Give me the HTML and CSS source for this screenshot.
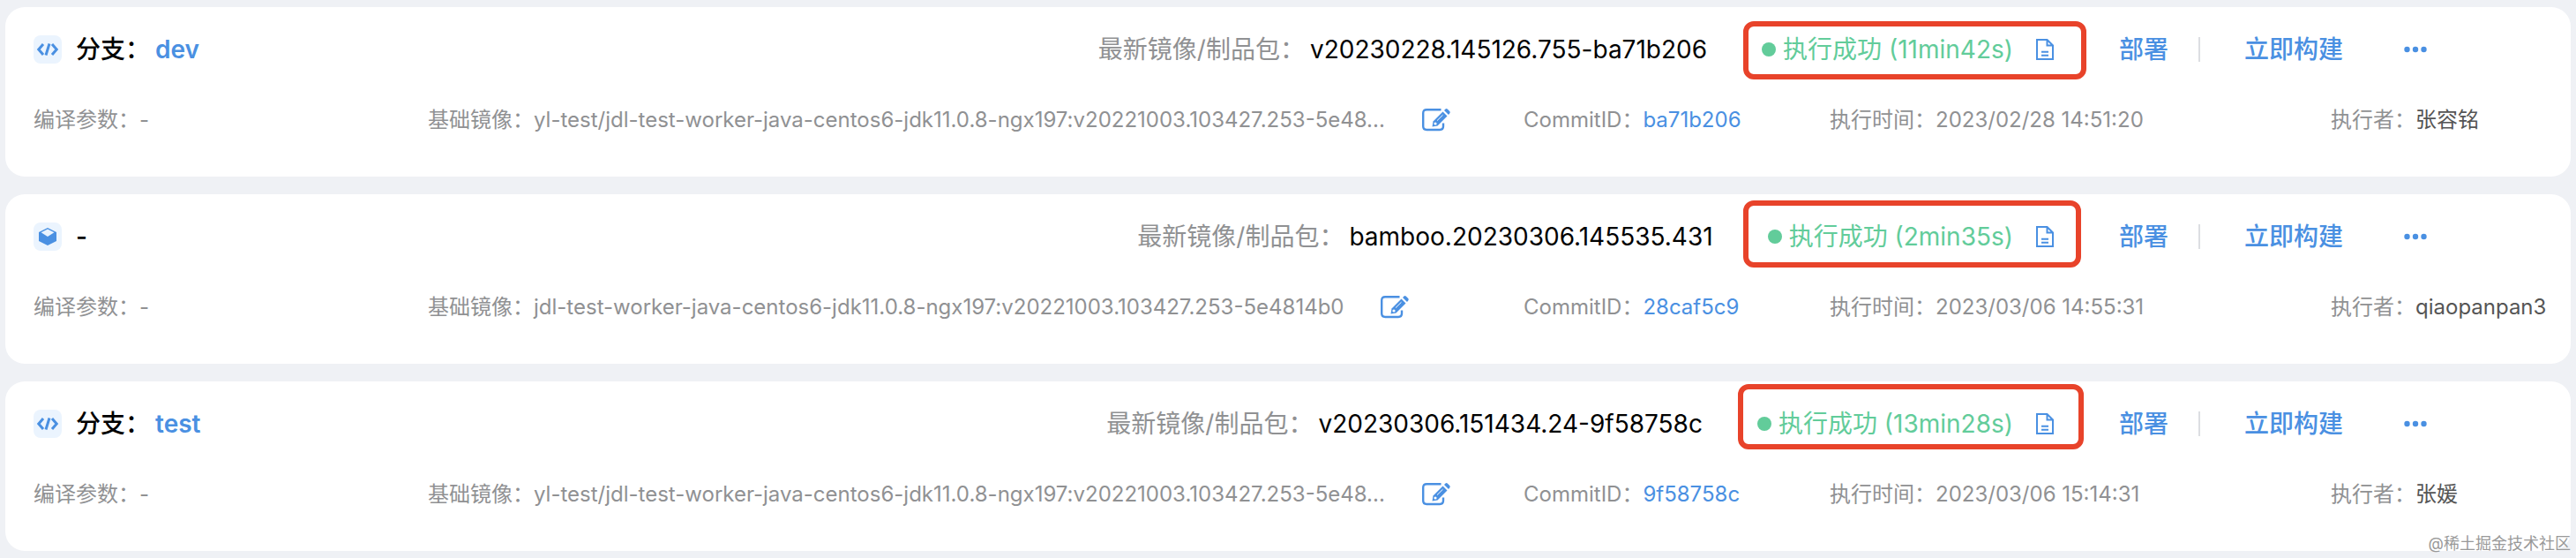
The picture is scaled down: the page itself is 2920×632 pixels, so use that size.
FILE: index.html
```html
<!DOCTYPE html>
<html lang="zh-CN">
<head>
    <meta charset="UTF-8">
    <meta name="viewport" content="width=device-width, initial-scale=1.0">
    <title>构建列表</title>
    <link rel="stylesheet" href="styles.css">
</head>
<body>
    <svg class="sprite" aria-hidden="true">
        <symbol id="icon-code" viewBox="0 0 32 32">
            <path d="M11 10 L5.8 16 L11 22 M21 10 L26.2 16 L21 22 M18 9.5 L14 22.5" fill="none" stroke="#4a90e2" stroke-width="3"/>
        </symbol>
        <symbol id="icon-box" viewBox="0 0 32 32">
            <path d="M16 6 L26 11 V21 L16 26 L6 21 V11 Z" fill="#4a90e2"/>
            <path d="M16 7.6 L23.4 11.3 L16 16 L8.6 11.3 Z" fill="#ebf4fe"/>
        </symbol>
        <symbol id="icon-edit" viewBox="0 0 32 28">
            <path d="M21.5 2.2 H5.2 Q1.2 2.2 1.2 6.2 V21 Q1.2 25 5.2 25 H20 Q24 25 24 21 V17.5" fill="none" stroke="#4a90e2" stroke-width="2.4"/>
            <path d="M11.5 21.5 L12.5 15.5 L23.5 4.5 L28.5 9.5 L17.5 20.5 Z" fill="#4a90e2"/>
            <path d="M25 3 L26.5 1.5 Q27.5 .5 28.7 1.5 L31.2 4 Q32.2 5.2 31.2 6.4 L30 8 Z" fill="#4a90e2"/>
            <path d="M17 14.6 L23.5 8.2" stroke="#fff" stroke-width="1"/>
            <circle cx="15" cy="18" r="1.6" fill="#fff"/>
        </symbol>
        <symbol id="icon-log" viewBox="0 0 20 24">
            <path d="M1 1 H12.5 L19 7.5 V23 H1 Z M12.5 1 V7.5 H19 M6 14.8 H14 M6 18.8 H14" fill="none" stroke="#4a90e2" stroke-width="2"/>
        </symbol>
        <symbol id="icon-more" viewBox="0 0 26 8">
            <circle cx="3.5" cy="4" r="3.2" fill="#4a90e2"/>
            <circle cx="13" cy="4" r="3.2" fill="#4a90e2"/>
            <circle cx="22.5" cy="4" r="3.2" fill="#4a90e2"/>
        </symbol>
    </svg>

    <main class="list">
        <section class="card">
            <div class="card-head">
                <svg class="type-icon"><use href="#icon-code"/></svg>
                <h2 class="branch">分支：<a href="#dev">dev</a></h2>
                <p class="version"><span>最新镜像/制品包：</span>v20230228.145126.755-ba71b206</p>
                <div class="status">
                    <i class="dot"></i>
                    <span>执行成功 (11min42s)</span>
                    <button type="button" aria-label="日志"><svg class="log-icon"><use href="#icon-log"/></svg></button>
                    <span class="mark mark-first"></span>
                </div>
                <div class="actions">
                    <button type="button">部署</button>
                    <i class="divider"></i>
                    <button type="button">立即构建</button>
                    <button type="button" class="more" aria-label="更多"><svg class="more-icon"><use href="#icon-more"/></svg></button>
                </div>
            </div>
            <div class="card-info">
                <p>编译参数：-</p>
                <p class="image">基础镜像：yl-test/jdl-test-worker-java-centos6-jdk11.0.8-ngx197:v20221003.103427.253-5e48...
                    <button type="button" aria-label="编辑"><svg class="edit-icon"><use href="#icon-edit"/></svg></button></p>
                <p>CommitID：<a href="#ba71b206">ba71b206</a></p>
                <p>执行时间：2023/02/28 14:51:20</p>
                <p>执行者：<span class="user">张容铭</span></p>
            </div>
        </section>

        <section class="card">
            <div class="card-head">
                <svg class="type-icon"><use href="#icon-box"/></svg>
                <h2 class="branch">-</h2>
                <p class="version"><span>最新镜像/制品包：</span>bamboo.20230306.145535.431</p>
                <div class="status">
                    <i class="dot"></i>
                    <span>执行成功 (2min35s)</span>
                    <button type="button" aria-label="日志"><svg class="log-icon"><use href="#icon-log"/></svg></button>
                    <span class="mark mark-second"></span>
                </div>
                <div class="actions">
                    <button type="button">部署</button>
                    <i class="divider"></i>
                    <button type="button">立即构建</button>
                    <button type="button" class="more" aria-label="更多"><svg class="more-icon"><use href="#icon-more"/></svg></button>
                </div>
            </div>
            <div class="card-info">
                <p>编译参数：-</p>
                <p class="image">基础镜像：jdl-test-worker-java-centos6-jdk11.0.8-ngx197:v20221003.103427.253-5e4814b0
                    <button type="button" aria-label="编辑"><svg class="edit-icon"><use href="#icon-edit"/></svg></button></p>
                <p>CommitID：<a href="#28caf5c9">28caf5c9</a></p>
                <p>执行时间：2023/03/06 14:55:31</p>
                <p>执行者：<span class="user">qiaopanpan3</span></p>
            </div>
        </section>

        <section class="card">
            <div class="card-head">
                <svg class="type-icon"><use href="#icon-code"/></svg>
                <h2 class="branch">分支：<a href="#test">test</a></h2>
                <p class="version"><span>最新镜像/制品包：</span>v20230306.151434.24-9f58758c</p>
                <div class="status">
                    <i class="dot"></i>
                    <span>执行成功 (13min28s)</span>
                    <button type="button" aria-label="日志"><svg class="log-icon"><use href="#icon-log"/></svg></button>
                    <span class="mark mark-third"></span>
                </div>
                <div class="actions">
                    <button type="button">部署</button>
                    <i class="divider"></i>
                    <button type="button">立即构建</button>
                    <button type="button" class="more" aria-label="更多"><svg class="more-icon"><use href="#icon-more"/></svg></button>
                </div>
            </div>
            <div class="card-info">
                <p>编译参数：-</p>
                <p class="image">基础镜像：yl-test/jdl-test-worker-java-centos6-jdk11.0.8-ngx197:v20221003.103427.253-5e48...
                    <button type="button" aria-label="编辑"><svg class="edit-icon"><use href="#icon-edit"/></svg></button></p>
                <p>CommitID：<a href="#9f58758c">9f58758c</a></p>
                <p>执行时间：2023/03/06 15:14:31</p>
                <p>执行者：<span class="user">张媛</span></p>
            </div>
        </section>
        <span class="watermark">@稀土掘金技术社区</span>
    </main>
</body>
</html>
```

FILE: styles.css
```css
body {
    margin: 0;
    background: #eff1f5;
    color: #909193;
    font-family: Inter, "Noto Sans CJK SC", sans-serif;
    font-size: 24px;
    line-height: 32px;
}

h2,
p {
    margin: 0;
    white-space: nowrap;
}

a {
    color: #4a90e2;
    text-decoration: none;
}

button {
    display: inline-flex;
    padding: 0;
    border: 0;
    background: none;
    color: #4a90e2;
    font: inherit;
    cursor: pointer;
}

.sprite {
    display: none;
}

.list {
    position: relative;
    display: flex;
    flex-direction: column;
    gap: 20px;
    padding: 8px 6px;
}

.card {
    padding: 24px 32px 48px;
    background: #fff;
    border-radius: 22px;
}

/* first row */
.card-head {
    display: flex;
    align-items: center;
    height: 48px;
    margin-bottom: 40px;
    font-size: 28px;
}

.type-icon {
    width: 32px;
    height: 32px;
    margin-right: 16px;
    background: #ebf4fe;
    border-radius: 8px;
}

.branch {
    color: #000;
    font-size: 28px;
    font-weight: 500;
}

.branch a {
    margin-left: 6px;
    font-weight: 600;
}

.version {
    margin-left: auto;
    color: #000;
}

.version span {
    margin-right: 6px;
    color: #909193;
}

.status {
    position: relative;
    display: flex;
    align-items: center;
    margin-left: 62px;
    color: #62cc9a;
}

.dot {
    width: 16px;
    height: 16px;
    margin-right: 8px;
    background: #62cc9a;
    border-radius: 50%;
}

.status button {
    margin-left: 26px;
}

.log-icon {
    width: 20px;
    height: 24px;
}

.mark {
    position: absolute;
    border: 6px solid #e8432a;
    border-radius: 12px;
    pointer-events: none;
}

.mark-first {
    inset: -16px -37px -18px -21px;
}

.mark-second {
    inset: -25px -31px -19px -28px;
}

.mark-third {
    inset: -29px -34px -13px -22px;
}

.actions {
    display: flex;
    align-items: center;
    margin-left: 74px;
    margin-right: 131px;
    font-weight: 500;
}

.divider {
    width: 2px;
    height: 28px;
    margin: 0 50px 0 34px;
    background: #dcdee2;
}

.more {
    margin-left: 69px;
}

.more-icon {
    width: 26px;
    height: 8px;
}

/* second row */
.card-info {
    display: grid;
    grid-template-columns: minmax(0, 447fr) minmax(0, 1242fr) minmax(0, 347fr) minmax(0, 568fr) minmax(0, 240fr);
}

.card-info p {
    height: 32px;
}

.image {
    display: flex;
    align-items: center;
}

.image button {
    margin-left: 42px;
}

.edit-icon {
    width: 32px;
    height: 28px;
}

.user {
    color: #555;
}

.watermark {
    position: absolute;
    right: 6px;
    bottom: 4px;
    color: #999;
    font-size: 18px;
    line-height: 24px;
}
```
